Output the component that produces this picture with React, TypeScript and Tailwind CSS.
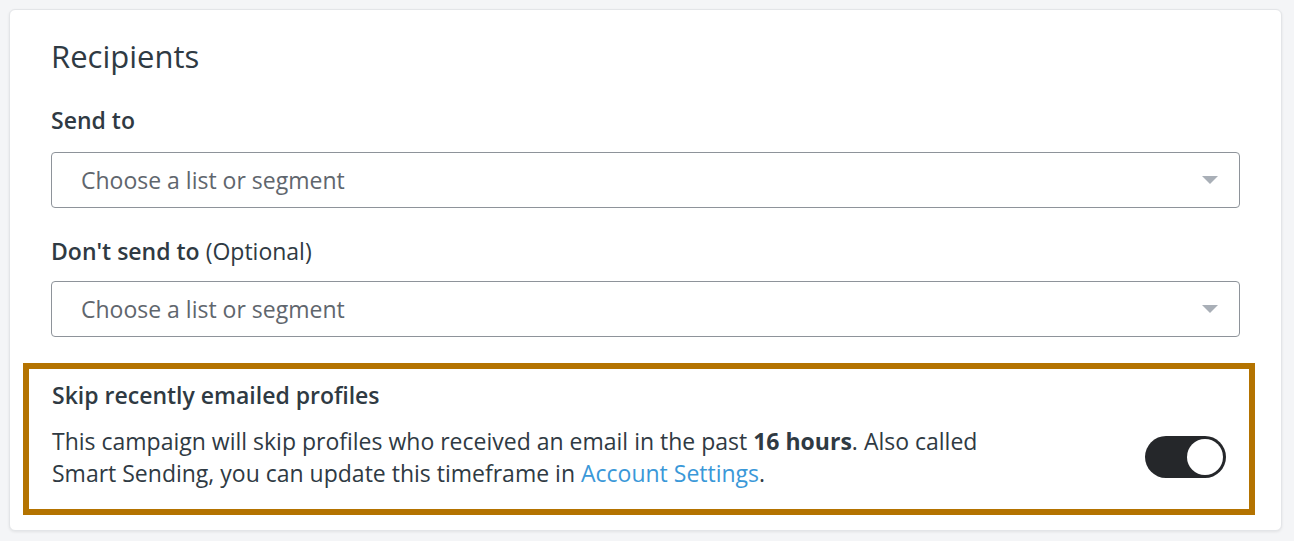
import React from "react";

function Select() {
  return (
    <div className="flex h-[56px] items-center justify-between rounded-[4px] border border-[#8e939a] bg-white pl-[29px] pr-[21px]">
      <span className="text-[23px] leading-[30px] text-[#5f666d]">Choose a list or segment</span>
      <svg width="16" height="8" viewBox="0 0 16 8">
        <path d="M0 0 L16 0 L8 8 Z" fill="#a9afb7" />
      </svg>
    </div>
  );
}

export default function App() {
  return (
    <div
      className="min-h-[541px] w-[1294px] bg-[#f4f5f7] p-[9px] pr-[12px]"
      style={{ fontFamily: "'Open Sans', sans-serif" }}
    >
      <div className="h-[522px] rounded-[6px] border border-[#e3e5e8] bg-white pl-[41px] pr-[41px] pt-[28px] text-[#2f3a43] shadow-[0_1px_3px_rgba(0,0,0,0.08)]">
        <h1 className="text-[31px] font-medium leading-[36px]">Recipients</h1>
        <div className="mt-[33px] text-[23px] font-semibold leading-[26px]">Send to</div>
        <div className="mt-[19px]">
          <Select />
        </div>
        <div className="mt-[30px] text-[23px] leading-[26px]">
          <span className="font-semibold">Don't send to</span> (Optional)
        </div>
        <div className="mt-[17px]">
          <Select />
        </div>
        <div className="-ml-[28px] -mr-[15px] mt-[26px] flex h-[152px] flex-col border-[6px] border-[#b47300] pl-[23px] pr-[23px] pt-[13px]">
          <div className="text-[23px] font-semibold leading-[26px]">Skip recently emailed profiles</div>
          <div className="mt-[17px] flex items-center justify-between">
            <p className="w-[960px] text-[23px] leading-[32px]">
              This campaign will skip profiles who received an email in the past{" "}
              <span className="font-bold">16 hours</span>. Also called Smart Sending, you can update
              this timeframe in <span className="text-[#3a98d8]">Account Settings</span>.
            </p>
            <div className="flex h-[42px] w-[81px] items-center justify-end rounded-full bg-[#25272a] pr-[3px]">
              <div className="h-[36px] w-[36px] rounded-full bg-white" />
            </div>
          </div>
        </div>
      </div>
    </div>
  );
}
